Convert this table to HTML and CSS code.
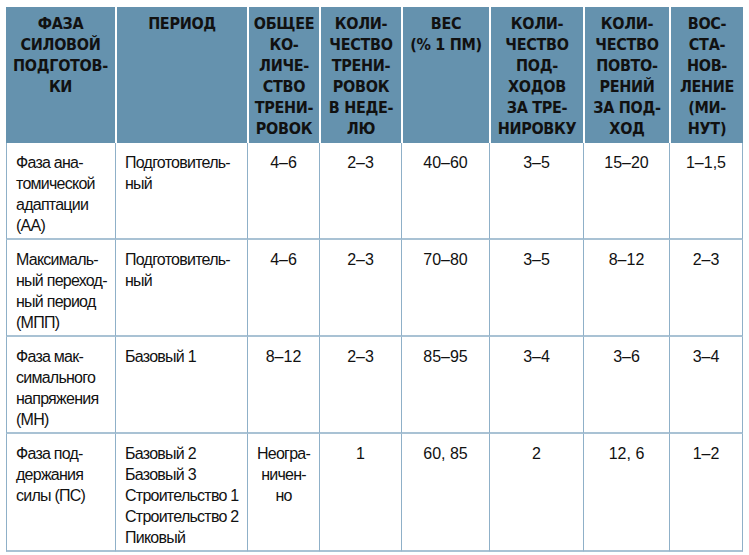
FILE: index.html
```html
<!DOCTYPE html>
<html lang="ru">
<head>
<meta charset="utf-8">
<link rel="stylesheet" href="styles.css">
</head>
<body>
<table class="plan">
  <colgroup>
    <col class="c1"><col class="c2"><col class="c3"><col class="c4"><col class="c5"><col class="c6"><col class="c7"><col class="c8">
  </colgroup>
  <thead>
    <tr>
      <th>ФАЗА<br>СИЛОВОЙ<br>ПОДГОТОВ-<br>КИ</th>
      <th>ПЕРИОД</th>
      <th>ОБЩЕЕ<br>КО-<br>ЛИЧЕ-<br>СТВО<br>ТРЕНИ-<br>РОВОК</th>
      <th>КОЛИ-<br>ЧЕСТВО<br>ТРЕНИ-<br>РОВОК<br>В НЕДЕ-<br>ЛЮ</th>
      <th>ВЕС<br>(% 1 ПМ)</th>
      <th>КОЛИ-<br>ЧЕСТВО<br>ПОД-<br>ХОДОВ<br>ЗА ТРЕ-<br>НИРОВКУ</th>
      <th>КОЛИ-<br>ЧЕСТВО<br>ПОВТО-<br>РЕНИЙ<br>ЗА ПОД-<br>ХОД</th>
      <th>ВОС-<br>СТА-<br>НОВ-<br>ЛЕНИЕ<br>(МИ-<br>НУТ)</th>
    </tr>
  </thead>
  <tbody>
    <tr>
      <td class="txt">Фаза ана-<br>томической<br>адаптации<br>(АА)</td>
      <td class="txt">Подготовитель-<br>ный</td>
      <td>4–6</td><td>2–3</td><td>40–60</td><td>3–5</td><td>15–20</td><td>1–1,5</td>
    </tr>
    <tr>
      <td class="txt">Максималь-<br>ный переход-<br>ный период<br>(МПП)</td>
      <td class="txt">Подготовитель-<br>ный</td>
      <td>4–6</td><td>2–3</td><td>70–80</td><td>3–5</td><td>8–12</td><td>2–3</td>
    </tr>
    <tr>
      <td class="txt">Фаза мак-<br>симального<br>напряжения<br>(МН)</td>
      <td class="txt">Базовый 1</td>
      <td>8–12</td><td>2–3</td><td>85–95</td><td>3–4</td><td>3–6</td><td>3–4</td>
    </tr>
    <tr>
      <td class="txt">Фаза под-<br>держания<br>силы (ПС)</td>
      <td class="txt">Базовый 2<br>Базовый 3<br>Строительство 1<br>Строительство 2<br>Пиковый</td>
      <td class="txt-c">Неогра-<br>ничен-<br>но</td><td>1</td><td>60, 85</td><td>2</td><td>12, 6</td><td>1–2</td>
    </tr>
  </tbody>
</table>
</body>
</html>
```

FILE: styles.css
```css
html, body {
  margin: 0;
  padding: 0;
  background: #ffffff;
}

body {
  padding: 7px 0 0 6px;
}

.plan {
  table-layout: fixed;
  width: 737px;
  border-collapse: separate;
  border-spacing: 0;
  font-family: "Liberation Sans", Arial, sans-serif;
  color: #111111;
}

.c1 { width: 109px; }
.c2 { width: 132px; }
.c3 { width: 72px; }
.c4 { width: 82px; }
.c5 { width: 88px; }
.c6 { width: 94px; }
.c7 { width: 86px; }
.c8 { width: 74px; }

.plan th {
  background: #6592ae;
  font-family: "DejaVu Sans Condensed", "DejaVu Sans", sans-serif;
  font-stretch: condensed;
  font-weight: bold;
  font-size: 16px;
  letter-spacing: -0.3px;
  line-height: 21px;
  color: #111111;
  text-align: center;
  vertical-align: top;
  white-space: nowrap;
  padding: 6px 0 4px;
  border-left: 2px solid #ffffff;
}

.plan th:first-child {
  border-left: none;
}

.plan td {
  font-size: 16px;
  line-height: 21px;
  text-align: center;
  vertical-align: top;
  white-space: nowrap;
  padding: 9px 0 2px;
  border-left: 1px solid #8fb0c8;
  border-bottom: 2px solid #a9c2d4;
}

.plan td:last-child {
  border-right: 1px solid #8fb0c8;
}

.plan td.txt {
  text-align: left;
  padding-left: 9px;
  letter-spacing: -0.75px;
}

.plan td.txt-c {
  letter-spacing: -0.75px;
}
```
